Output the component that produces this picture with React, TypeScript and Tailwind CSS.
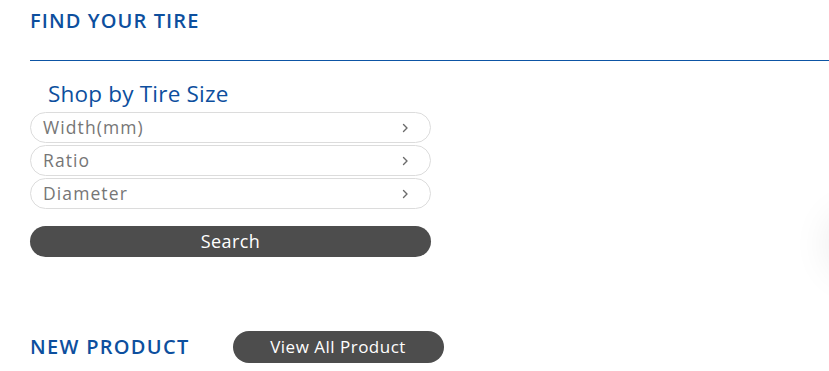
import React from "react";

const Chevron = () => (
  <svg width="10" height="10" viewBox="0 0 10 10" fill="none" stroke="#6b6b6b" strokeWidth="1.4" strokeLinecap="round" strokeLinejoin="round">
    <path d="M3.5 1.5 L7 5 L3.5 8.5" />
  </svg>
);

const Field = ({ label }: { label: string }) => (
  <div className="flex h-[31px] items-center justify-between rounded-full border border-[#dcdcdc] pl-[12px] pr-[20px]">
    <span className="text-[17.5px] tracking-[1.1px] text-[#767676]">{label}</span>
    <Chevron />
  </div>
);

export default function App() {
  return (
    <div className="relative h-[371px] w-[829px] overflow-hidden bg-white" style={{ fontFamily: '"Open Sans", "Noto Sans", sans-serif' }}>
      <div className="pl-[30px] pt-[7px]">
        <h2 className="text-[20px] font-semibold leading-[27px] tracking-[1.1px] text-[#0d4f9e]">FIND YOUR TIRE</h2>
        <div className="mt-[26px] h-px bg-[#0d55a5]" />
        <div className="w-[401px] pt-[18px]">
          <h3 className="pl-[18px] text-[22.5px] leading-[30px] tracking-[0.2px] text-[#0d4f9e]">Shop by Tire Size</h3>
          <div className="mt-[3px] flex flex-col gap-[2px]">
            <Field label="Width(mm)" />
            <Field label="Ratio" />
            <Field label="Diameter" />
          </div>
          <button className="mt-[17px] flex h-[31px] w-full items-center justify-center rounded-full bg-[#4d4d4d] text-[18px] tracking-[0.4px] text-white">
            Search
          </button>
        </div>
        <div className="mt-[74px] flex items-center">
          <h2 className="text-[20px] font-semibold tracking-[1.3px] text-[#0d4f9e]">NEW PRODUCT</h2>
          <button className="ml-[43px] flex h-[32px] w-[211px] items-center justify-center rounded-full bg-[#4d4d4d] text-[17px] tracking-[0.5px] text-white">
            View All Product
          </button>
        </div>
      </div>
      <div className="absolute left-[829px] top-[214px] h-[60px] w-[200px] rounded-[30px] shadow-[0_0_40px_rgba(0,0,0,0.09)]" />
    </div>
  );
}
